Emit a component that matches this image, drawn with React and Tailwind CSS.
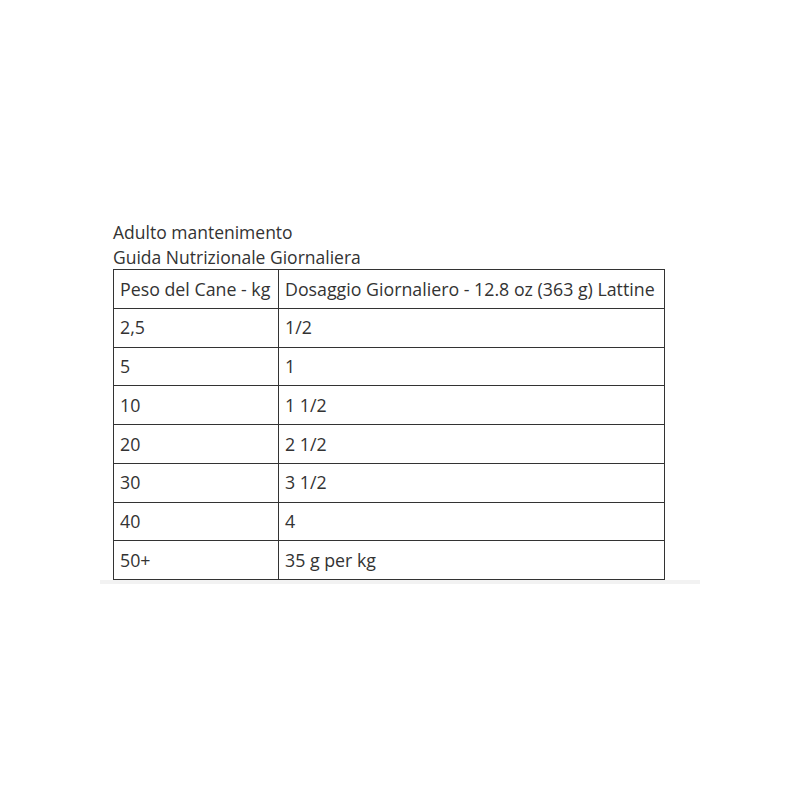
import React from "react";

const rows = [
  ["2,5", "1/2"],
  ["5", "1"],
  ["10", "1 1/2"],
  ["20", "2 1/2"],
  ["30", "3 1/2"],
  ["40", "4"],
  ["50+", "35 g per kg"],
];

export default function App() {
  return (
    <div className="w-[800px] h-[800px] bg-white pt-[220px] font-['Open_Sans',sans-serif] text-[#333]">
      <div className="w-[600px] mx-auto">
        <div className="pl-[13px] text-[17.5px] leading-[25px]">
          <p>Adulto mantenimento</p>
          <p>Guida Nutrizionale Giornaliera</p>
        </div>
        <table className="ml-[13px] w-[552px] border-collapse text-[17.8px] -mt-px">
          <tbody>
            <tr className="h-[38.75px]">
              <td className="w-[165px] border border-[#333] px-[6px]">Peso del Cane - kg</td>
              <td className="border border-[#333] px-[6px]">Dosaggio Giornaliero - 12.8 oz (363 g) Lattine</td>
            </tr>
            {rows.map(([kg, dose]) => (
              <tr key={kg} className="h-[38.75px]">
                <td className="border border-[#333] px-[6px]">{kg}</td>
                <td className="border border-[#333] px-[6px]">{dose}</td>
              </tr>
            ))}
          </tbody>
        </table>
        <div className="h-[4px] bg-[#f2f2f2]"></div>
      </div>
    </div>
  );
}
